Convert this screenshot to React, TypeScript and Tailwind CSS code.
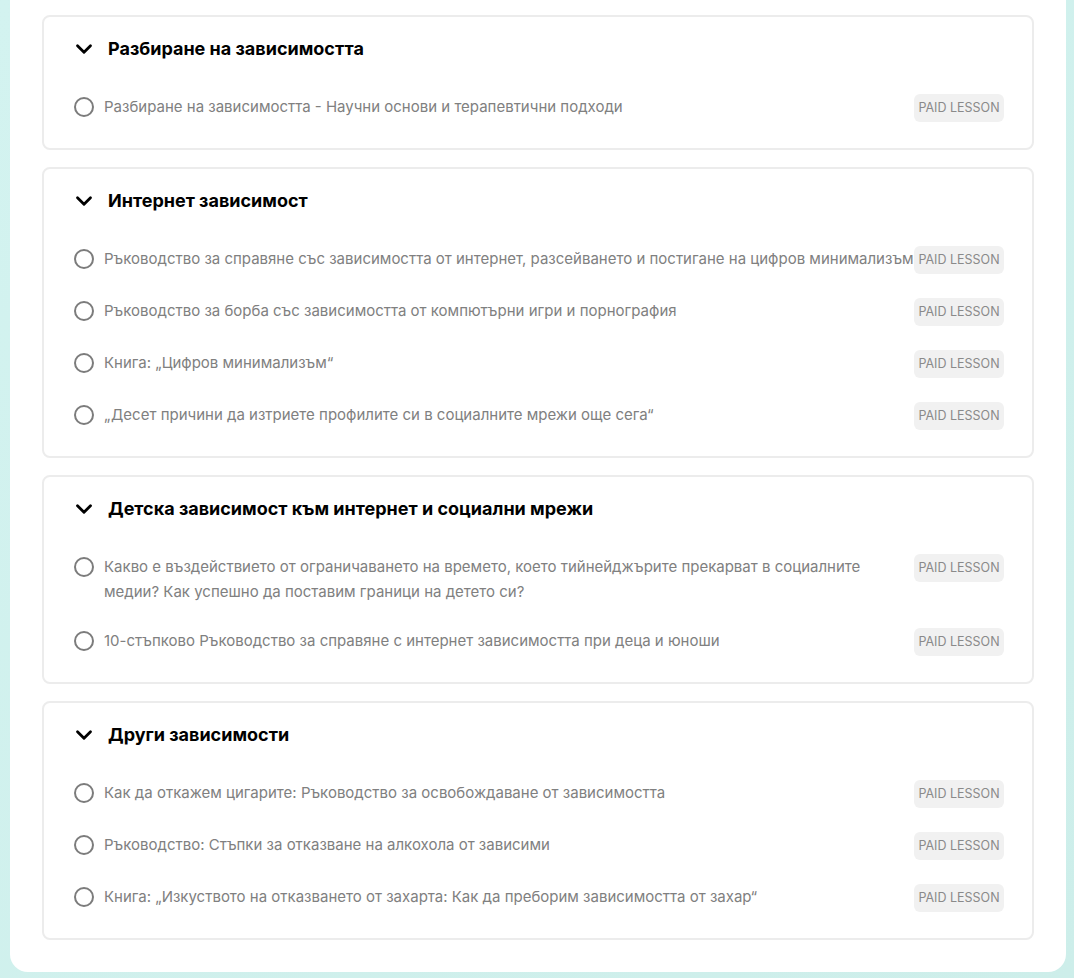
import React from "react";
import { ChevronDown } from "lucide-react";

interface Section {
  title: string;
  lessons: string[];
}

const sections: Section[] = [
  {
    title: "Разбиране на зависимостта",
    lessons: ["Разбиране на зависимостта - Научни основи и терапевтични подходи"],
  },
  {
    title: "Интернет зависимост",
    lessons: [
      "Ръководство за справяне със зависимостта от интернет, разсейването и постигане на цифров минимализъм",
      "Ръководство за борба със зависимостта от компютърни игри и порнография",
      "Книга: „Цифров минимализъм“",
      "„Десет причини да изтриете профилите си в социалните мрежи още сега“",
    ],
  },
  {
    title: "Детска зависимост към интернет и социални мрежи",
    lessons: [
      "Какво е въздействието от ограничаването на времето, което тийнейджърите прекарват в социалните медии? Как успешно да поставим граници на детето си?",
      "10-стъпково Ръководство за справяне с интернет зависимостта при деца и юноши",
    ],
  },
  {
    title: "Други зависимости",
    lessons: [
      "Как да откажем цигарите: Ръководство за освобождаване от зависимостта",
      "Ръководство: Стъпки за отказване на алкохола от зависими",
      "Книга: „Изкуството на отказването от захарта: Как да преборим зависимостта от захар“",
    ],
  },
];

const LessonRow = ({ text }: { text: string }) => (
  <div className="flex items-start">
    {/* unchecked marker */}
    <span className="mt-[3px] h-[20px] w-[20px] shrink-0 rounded-full border-2 border-[#7c7c7c]" />
    <span className="ml-[10px] mr-[-3px] flex-1 text-[15px] leading-[25px] text-[#808080]">{text}</span>
    <span className="flex h-[28px] w-[90px] shrink-0 items-center justify-center rounded-md bg-[#f1f1f1] pt-px text-[12.5px] text-[#8a8a8a]">
      PAID LESSON
    </span>
  </div>
);

const SectionCard = ({ section }: { section: Section }) => (
  <div className="rounded-lg border-2 border-[#ececec] bg-white pb-[26px] pl-[30px] pr-[28px] pt-[20px]">
    <div className="flex h-6 items-center">
      <ChevronDown size={26} strokeWidth={2.6} className="-ml-[3px] shrink-0 text-black" />
      <h3 className="ml-[11px] text-[18px] font-bold leading-6 text-black">{section.title}</h3>
    </div>
    <div className="mt-[33px] flex flex-col gap-6">
      {section.lessons.map((l) => (
        <LessonRow key={l} text={l} />
      ))}
    </div>
  </div>
);

export default function App() {
  return (
    <div
      className="min-h-[978px] bg-gradient-to-br from-[#d3f3f0] to-[#cdeeea] pb-[7px] pl-[10px] pr-[8px]"
      style={{ fontFamily: "Inter, 'Noto Sans', sans-serif" }}
    >
      <div className="flex flex-col gap-[17px] rounded-b-[18px] bg-white px-8 pb-8 pt-[15px]">
        {sections.map((s) => (
          <SectionCard key={s.title} section={s} />
        ))}
      </div>
    </div>
  );
}
